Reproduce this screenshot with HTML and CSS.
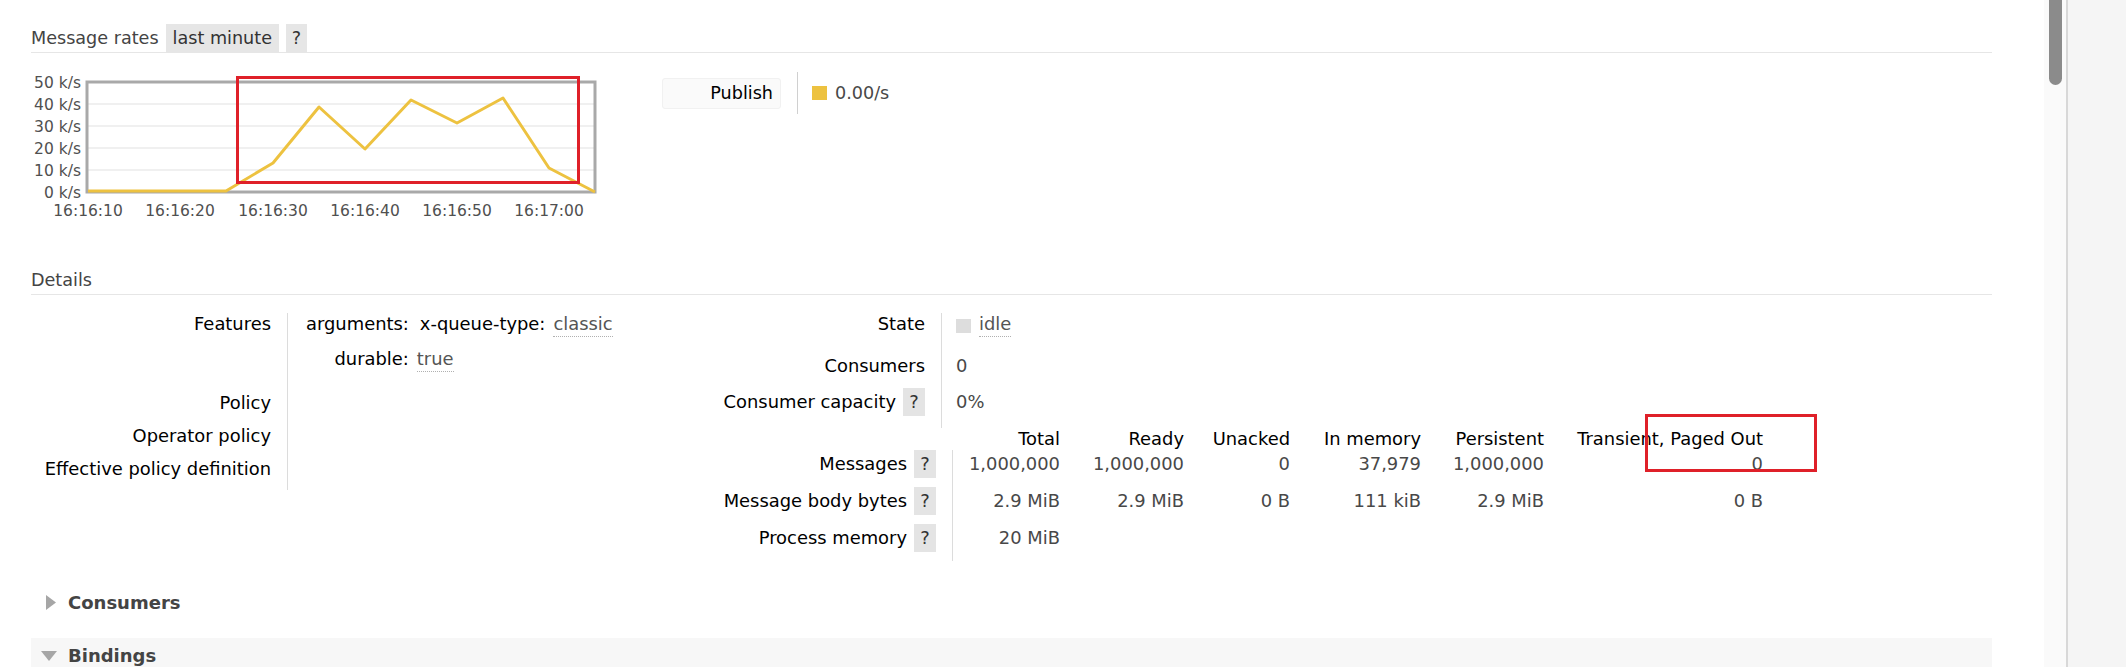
FILE: index.html
```html
<!DOCTYPE html>
<html>
<head>
<meta charset="utf-8">
<title>Queue</title>
<link rel="stylesheet" href="styles.css">
</head>
<body>
<div class="window">
  <main class="page">
    <section class="section">
      <h2 class="h2"><span class="h2-title">Message rates</span><span class="tag">last minute</span><span class="tag tag-help">?</span></h2>
      <div class="chart-row">
        <div class="chart">
          <svg width="580" height="160" viewBox="0 0 580 160">
            <rect x="56" y="16" width="508" height="110" fill="#fff" stroke="none"/>
            <g stroke="#ebebeb" stroke-width="1.5">
              <line x1="57" y1="38" x2="563" y2="38"/>
              <line x1="57" y1="60" x2="563" y2="60"/>
              <line x1="57" y1="82" x2="563" y2="82"/>
              <line x1="57" y1="104" x2="563" y2="104"/>
            </g>
            <rect x="56" y="16" width="508" height="110" fill="none" stroke="#a9a9a9" stroke-width="3"/>
            <g class="axis" text-anchor="end">
              <text x="50" y="16" dy="0.36em">50 k/s</text>
              <text x="50" y="38" dy="0.36em">40 k/s</text>
              <text x="50" y="60" dy="0.36em">30 k/s</text>
              <text x="50" y="82" dy="0.36em">20 k/s</text>
              <text x="50" y="104" dy="0.36em">10 k/s</text>
              <text x="50" y="126" dy="0.36em">0 k/s</text>
            </g>
            <g class="axis" text-anchor="middle">
              <text x="57" y="144" dy="0.36em">16:16:10</text>
              <text x="149" y="144" dy="0.36em">16:16:20</text>
              <text x="242" y="144" dy="0.36em">16:16:30</text>
              <text x="334" y="144" dy="0.36em">16:16:40</text>
              <text x="426" y="144" dy="0.36em">16:16:50</text>
              <text x="518" y="144" dy="0.36em">16:17:00</text>
            </g>
            <polyline fill="none" stroke="#edc240" stroke-width="3" stroke-linejoin="round" points="57,125 103,125 149,125 195,125 242,97 288,41 334,83 380,34 426,57 472,32 518,102 564,126"/>
          </svg>
        </div>
        <div class="legend">
          <div class="legend-key">Publish</div>
          <div class="legend-val"><span class="swatch"></span><span>0.00/s</span></div>
        </div>
      </div>
    </section>

    <section class="section details">
      <h2 class="h2"><span class="h2-title">Details</span></h2>
      <div class="details-body">
        <div class="kv-left">
          <div class="lbl lbl-features">Features</div>
          <div class="val val-features">
            <div class="args">
              <div class="arg-key">arguments:</div>
              <div class="arg-val"><span class="arg-key inner">x-queue-type:</span><span class="abbr">classic</span></div>
              <div class="arg-key">durable:</div>
              <div class="arg-val"><span class="abbr">true</span></div>
            </div>
          </div>
          <div class="lbl">Policy</div>
          <div class="val"></div>
          <div class="lbl">Operator policy</div>
          <div class="val"></div>
          <div class="lbl lbl-last">Effective policy definition</div>
          <div class="val val-last"></div>
        </div>

        <div class="right">
          <div class="kv-state">
            <div class="slbl srow-1">State</div>
            <div class="sval srow-1"><span class="state-box"></span><span class="abbr">idle</span></div>
            <div class="slbl srow-2">Consumers</div>
            <div class="sval srow-2">0</div>
            <div class="slbl srow-3"><span>Consumer capacity</span><span class="help">?</span></div>
            <div class="sval srow-3">0%</div>
          </div>

          <div class="msgs">
            <div class="mh"></div>
            <div class="mh">Total</div>
            <div class="mh">Ready</div>
            <div class="mh">Unacked</div>
            <div class="mh">In memory</div>
            <div class="mh">Persistent</div>
            <div class="mh">Transient, Paged Out</div>

            <div class="ml"><span>Messages</span><span class="help">?</span></div>
            <div class="mv first">1,000,000</div>
            <div class="mv">1,000,000</div>
            <div class="mv">0</div>
            <div class="mv">37,979</div>
            <div class="mv">1,000,000</div>
            <div class="mv">0</div>

            <div class="ml"><span>Message body bytes</span><span class="help">?</span></div>
            <div class="mv first">2.9 MiB</div>
            <div class="mv">2.9 MiB</div>
            <div class="mv">0 B</div>
            <div class="mv">111 kiB</div>
            <div class="mv">2.9 MiB</div>
            <div class="mv">0 B</div>

            <div class="ml"><span>Process memory</span><span class="help">?</span></div>
            <div class="mv first">20 MiB</div>
            <div class="mv"></div>
            <div class="mv"></div>
            <div class="mv"></div>
            <div class="mv"></div>
            <div class="mv"></div>
          </div>
        </div>
      </div>
    </section>

    <div class="collapse closed">
      <svg class="tri-right" width="10" height="15" viewBox="0 0 10 15"><polygon points="0,0 10,7.5 0,15" fill="#a6a6a6"/></svg>
      <span class="collapse-title">Consumers</span>
    </div>
    <div class="collapse open">
      <svg class="tri-down" width="16" height="10" viewBox="0 0 16 10"><polygon points="0,0 16,0 8,10" fill="#a6a6a6"/></svg>
      <span class="collapse-title">Bindings</span>
    </div>

    <div class="annot annot-chart"></div>
    <div class="annot annot-table"></div>
  </main>
  <div class="scrollbar"><div class="thumb"></div></div>
  <aside class="side"></aside>
</div>
</body>
</html>
```

FILE: styles.css
```css
html, body {
  margin: 0;
  padding: 0;
  background: #fff;
}

body {
  font-family: "DejaVu Sans", Verdana, sans-serif;
  font-size: 17.6px;
  color: #484848;
}

.window {
  display: flex;
  width: 2126px;
  height: 667px;
  overflow: hidden;
}

.page {
  flex: 0 0 2044px;
  box-sizing: border-box;
  padding: 24px 52px 0 31px;
  position: relative;
  overflow: hidden;
}

.h2 {
  margin: 0;
  height: 28px;
  display: flex;
  align-items: center;
  border-bottom: 1px solid #e6e6e6;
  font-size: 17.6px;
  font-weight: normal;
  color: #444;
}

.h2-title {
  line-height: 28px;
}

.tag {
  margin-left: 7px;
  padding: 0 7px;
  height: 28px;
  line-height: 28px;
  background: #e6e6e6;
  color: #333;
}

.tag-help {
  width: 21px;
  padding: 0;
  text-align: center;
}

/* chart */
.chart-row {
  display: flex;
  align-items: flex-start;
  margin-top: 13px;
}

.chart {
  width: 580px;
  height: 160px;
}

.chart svg {
  display: block;
}

.axis {
  font-family: "DejaVu Sans", Verdana, sans-serif;
  font-size: 15.5px;
  fill: #505050;
}

.legend {
  display: flex;
  align-items: center;
  margin: 6px 0 0 51px;
}

.legend-key {
  box-sizing: border-box;
  width: 119px;
  height: 31px;
  line-height: 29px;
  padding-right: 7px;
  text-align: right;
  background: #fafafa;
  border: 1px solid #f1f1f1;
  border-radius: 3px;
  color: #000;
}

.legend-val {
  display: flex;
  align-items: center;
  height: 42px;
  margin-left: 16px;
  padding-left: 14px;
  border-left: 1px solid #d0d0d0;
  color: #484848;
}

.swatch {
  width: 15px;
  height: 14px;
  background: #edc240;
  margin-right: 8px;
}

/* details */
.details {
  margin-top: 40px;
}

.details-body {
  display: flex;
  align-items: flex-start;
  margin-top: 18px;
  font-size: 17.9px;
}

.kv-left {
  flex: 0 0 685px;
  display: grid;
  grid-template-columns: 256px 1fr;
}

.lbl {
  height: 33px;
  line-height: 33px;
  padding-right: 16px;
  text-align: right;
  color: #000;
  white-space: nowrap;
}

.lbl-features {
  height: 73px;
  line-height: 22px;
}

.val {
  height: 33px;
  line-height: 33px;
  padding-left: 18px;
  border-left: 1px solid #dcdcdc;
}

.val-features {
  height: 73px;
  line-height: 22px;
}

.val-last {
  height: 38px;
}

.args {
  display: grid;
  grid-template-columns: auto 1fr;
  grid-auto-rows: 35px;
  column-gap: 8px;
  align-items: start;
}

.arg-key {
  text-align: right;
  color: #000;
}

.arg-val {
  display: flex;
  align-items: flex-start;
}

.arg-key.inner {
  margin-left: 3px;
  margin-right: 8px;
}

.abbr {
  color: #555;
  border-bottom: 1px dotted #b0b0b0;
  line-height: 22px;
  display: inline-block;
  height: 24px;
  box-sizing: border-box;
}

.right {
  display: flex;
  flex-direction: column;
}

.kv-state {
  display: grid;
  grid-template-columns: 225px auto;
}

.slbl {
  display: flex;
  justify-content: flex-end;
  align-items: flex-start;
  padding-right: 16px;
  color: #000;
  white-space: nowrap;
}

.sval {
  display: flex;
  align-items: flex-start;
  padding-left: 14px;
  border-left: 1px solid #dcdcdc;
  min-width: 120px;
}

.srow-1 {
  height: 36px;
  line-height: 22px;
}

.srow-2 {
  height: 34px;
  line-height: 34px;
}

.srow-3 {
  height: 40px;
  padding-top: 5px;
  line-height: 28px;
}

.state-box {
  width: 15px;
  height: 14px;
  margin-top: 6px;
  margin-right: 8px;
  background: #dddddd;
}

.help {
  display: inline-block;
  width: 22px;
  height: 28px;
  line-height: 28px;
  margin-left: 7px;
  text-align: center;
  background: #e4e4e4;
  color: #333;
}

.msgs {
  display: grid;
  grid-template-columns: 236px 108px 124px 106px 131px 123px 219px;
}

.mh {
  height: 22px;
  line-height: 22px;
  text-align: right;
  color: #000;
  white-space: nowrap;
}

.ml {
  display: flex;
  justify-content: flex-end;
  align-items: flex-start;
  height: 37px;
  line-height: 28px;
  padding-right: 16px;
  color: #000;
  white-space: nowrap;
}

.mv {
  height: 37px;
  line-height: 28px;
  text-align: right;
  color: #484848;
  white-space: nowrap;
}

.mv.first {
  border-left: 1px solid #dcdcdc;
}

/* collapsible sections */
.collapse {
  display: flex;
  align-items: center;
  font-weight: bold;
  font-size: 18px;
  color: #444;
}

.collapse.closed {
  margin-top: 27px;
  height: 28px;
  padding-left: 15px;
}

.collapse.open {
  margin-top: 22px;
  height: 40px;
  padding-left: 10px;
  align-items: flex-start;
  padding-top: 7px;
  line-height: 22px;
  background: #f7f7f7;
}

.tri-right {
  margin-right: 12px;
}

.tri-down {
  margin-top: 6px;
  margin-right: 11px;
}

/* annotations drawn over the screenshot */
.annot {
  position: absolute;
  box-sizing: border-box;
  border: 3px solid #df2029;
}

.annot-chart {
  left: 236px;
  top: 76px;
  width: 344px;
  height: 108px;
}

.annot-table {
  left: 1645px;
  top: 414px;
  width: 172px;
  height: 58px;
}

/* scrollbar + side panel */
.scrollbar {
  flex: 0 0 22px;
  background: #fafafa;
}

.thumb {
  width: 13px;
  height: 85px;
  margin-left: 5px;
  background: #8b8b8b;
  border-radius: 0 0 7px 7px;
}

.side {
  flex: 1 1 auto;
  background: #f5f5f5;
  border-left: 2px solid #d8d8d8;
}
```
